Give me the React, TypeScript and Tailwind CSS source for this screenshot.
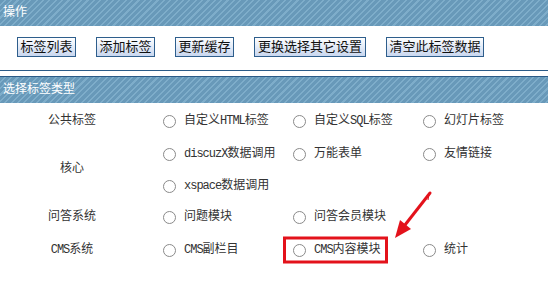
import * as React from "react";

const stripe =
  "bg-[repeating-linear-gradient(135deg,#6899b9_0px,#6899b9_3px,#7eadca_3px,#7eadca_4.5px)]";

const buttons = [
  { name: "标签列表", w: "w-[59px]" },
  { name: "添加标签", w: "w-[59px]" },
  { name: "更新缓存", w: "w-[59px]" },
  { name: "更换选择其它设置", w: "w-[112px]" },
  { name: "清空此标签数据", w: "w-[98px]" },
];

// latin runs are narrower than the CJK glyphs (old SimSun look)
function Text({ value }: { value: string }) {
  const parts = value.split(/([A-Za-z]+)/).filter(Boolean);
  return (
    <>
      {parts.map((p, i) =>
        /^[A-Za-z]+$/.test(p) ? (
          <span key={i} className="text-[12px] tracking-[-1px]">
            {p}
          </span>
        ) : (
          <span key={i}>{p}</span>
        )
      )}
    </>
  );
}

function Header({ title }: { title: string }) {
  return (
    <div className={`h-[26px] flex items-center px-[3px] text-[12px] text-white leading-none ${stripe}`}>
      {title}
    </div>
  );
}

function Radio({ label, marked }: { label: string; marked?: boolean }) {
  return (
    <label className="relative flex items-center shrink-0 w-[130px] h-full text-[12px] text-[#333] leading-none">
      <span className="w-[13px] h-[13px] rounded-full border border-[#8a8a8a] bg-white shrink-0" />
      <span className="ml-[8px] whitespace-nowrap">
        <Text value={label} />
      </span>
      {marked && (
        <span className="absolute left-[-10px] top-1/2 -translate-y-1/2 w-[105px] h-[27px] border-[3px] border-[#e3121b]" />
      )}
    </label>
  );
}

function Line({ items, h, marked }: { items: string[]; h: string; marked?: string }) {
  return (
    <div className={`flex pl-[19px] ${h}`}>
      {items.map((it) => (
        <Radio key={it} label={it} marked={it === marked} />
      ))}
    </div>
  );
}

function Row({ label, children }: { label: string; children: React.ReactNode }) {
  return (
    <div className="flex">
      <div className="w-[144px] shrink-0 flex items-center justify-center text-[12px] text-[#333] leading-none">
        <Text value={label} />
      </div>
      <div className="flex flex-col">{children}</div>
    </div>
  );
}

export default function App() {
  return (
    <div
      className="relative w-[548px] h-[304px] overflow-hidden bg-white"
      style={{ fontFamily: '"Liberation Mono", "Noto Sans CJK SC", monospace' }}
    >
      {/* 操作 */}
      <div className="border-b border-[#2b5b87]">
        <Header title="操作" />
        <div className="h-[44px] flex items-start pt-[11px] pl-[17px] gap-[20px]">
          {buttons.map((b) => (
            <button
              key={b.name}
              className={`${b.w} h-[20px] flex items-center justify-center border border-[#2e5e8c] bg-gradient-to-b from-white to-[#c9d7ef] text-[13px] text-[#111] leading-none whitespace-nowrap`}
            >
              {b.name}
            </button>
          ))}
        </div>
      </div>

      {/* 选择标签类型 */}
      <div className="mt-[5px] border-t border-[#2b5b87]">
        <Header title="选择标签类型" />
        <div className="pt-[2px]">
          <Row label="公共标签">
            <Line h="h-[32px]" items={["自定义HTML标签", "自定义SQL标签", "幻灯片标签"]} />
          </Row>
          <Row label="核心">
            <Line h="h-[34px]" items={["discuzX数据调用", "万能表单", "友情链接"]} />
            <Line h="h-[30px]" items={["xspace数据调用"]} />
          </Row>
          <Row label="问答系统">
            <Line h="h-[32px]" items={["问题模块", "问答会员模块"]} />
          </Row>
          <Row label="CMS系统">
            <Line h="h-[34px]" items={["CMS副栏目", "CMS内容模块", "统计"]} marked="CMS内容模块" />
          </Row>
        </div>
      </div>

      {/* annotation arrow */}
      <svg className="absolute left-[385px] top-[188px]" width="52" height="56" viewBox="0 0 52 56">
        <line x1="45" y1="5" x2="18" y2="39.5" stroke="#e3121b" strokeWidth="3" strokeLinecap="round" />
        <line x1="44" y1="6" x2="43" y2="12" stroke="#e3121b" strokeWidth="1" />
        <polygon points="10,50 26,41 15,32" fill="#e3121b" />
      </svg>
    </div>
  );
}
